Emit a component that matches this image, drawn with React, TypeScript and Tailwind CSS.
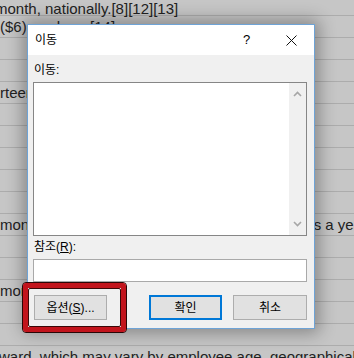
import React from "react";

function Chevron({ up }: { up?: boolean }) {
  return (
    <svg width="9" height="6" viewBox="0 0 9 6" className="block">
      <path
        d={up ? "M1 5 L4.5 1.5 L8 5" : "M1 1 L4.5 4.5 L8 1"}
        fill="none"
        stroke="#a6a6a6"
        strokeWidth="1.6"
      />
    </svg>
  );
}

export default function App() {
  return (
    <div className="relative w-[354px] h-[358px] overflow-hidden bg-[#c6c6c6] font-['Liberation_Sans',Arial,sans-serif] text-[15px] text-[#222222] whitespace-nowrap">
      {/* background page rows */}
      <div className="flex flex-col">
        <div className="h-[16px] border-b border-[#acacac] leading-[16px] pt-[1px] -ml-[5px]">
          month, nationally.[8][12][13]
        </div>
        <div className="h-[22px] border-b border-[#acacac] leading-[22px]">($6) per hour.[14]</div>
        <div className="h-[22px] border-b border-[#acacac]" />
        <div className="h-[22px] border-b border-[#acacac]" />
        <div className="h-[22px] border-b border-[#acacac] leading-[22px]">rteen</div>
        <div className="h-[22px] border-b border-[#acacac]" />
        <div className="h-[22px] border-b border-[#acacac]" />
        <div className="h-[22px] border-b border-[#acacac]" />
        <div className="h-[22px] border-b border-[#acacac]" />
        <div className="h-[22px] border-b border-[#acacac]" />
        <div className="h-[22px] border-b border-[#acacac] leading-[22px] flex">
          <span className="inline-block w-[272px] shrink-0">month</span>
          <span>months a year</span>
        </div>
        <div className="h-[22px] border-b border-[#acacac]" />
        <div className="h-[22px] border-b border-[#acacac]" />
        <div className="h-[22px] border-b border-[#acacac] leading-[22px]">month</div>
        <div className="h-[22px] border-b border-[#acacac]" />
        <div className="h-[22px] border-b border-[#acacac]" />
        <div className="h-[22px] leading-[22px] -ml-[1px]">
          ward, which may vary by employee age, geographical
        </div>
      </div>

      {/* dialog */}
      <div className="absolute left-[27px] top-[24px] w-[288px] border border-[#6ea3d6] bg-[#f0f0f0] shadow-[0_0_16px_4px_rgba(0,0,0,0.32)] font-['Liberation_Sans','Noto_Sans_CJK_KR',sans-serif] text-[12px] text-black">
        {/* title bar */}
        <div className="h-[30px] bg-white flex items-center">
          <div className="pl-[7px] flex-1 leading-[16px]">이동</div>
          <div className="w-[45px] h-[30px] flex items-center justify-center text-[13px]">?</div>
          <div className="w-[45px] h-[30px] flex items-center justify-center">
            <svg width="11" height="11" viewBox="0 0 11 11">
              <path d="M0.5 0.5 L10.5 10.5 M10.5 0.5 L0.5 10.5" stroke="#111" strokeWidth="1" />
            </svg>
          </div>
        </div>
        {/* body */}
        <div className="flex flex-col pl-[5px] pr-[7px] pb-[8px]">
          <div className="mt-[7px] h-[16px] leading-[16px] pl-[1px]">이동:</div>
          <div className="mt-[4px] h-[154px] border border-[#868686] bg-white flex">
            <div className="flex-1" />
            <div className="w-[17px] bg-[#f0f0f0] flex flex-col items-center justify-between py-[8px]">
              <Chevron up />
              <Chevron />
            </div>
          </div>
          <div className="mt-[3px] h-[16px] leading-[16px] pl-[1px]">
            참조(<span className="underline">R</span>):
          </div>
          <div className="mt-[4px] h-[23px] border border-[#a9a9a9] bg-white" />
          <div className="mt-[13px] flex items-center">
            <div className="ml-[1px] w-[73px] h-[25px] border border-[#adadad] bg-[#e1e1e1] flex items-center justify-center">
              옵션(<span className="underline">S</span>)...
            </div>
            <div className="flex-1" />
            <div className="w-[73px] h-[25px] border-2 border-[#0078d7] bg-[#e1e1e1] flex items-center justify-center">
              확인
            </div>
            <div className="ml-[11px] w-[74px] h-[25px] border border-[#adadad] bg-[#e1e1e1] flex items-center justify-center">
              취소
            </div>
          </div>
        </div>
      </div>

      {/* red highlight */}
      <div className="absolute left-[22px] top-[282px] w-[105px] h-[51px] rounded-[4px] border border-[#2a0606]">
        <div className="h-full border-[5px] border-[#c2141c] rounded-[3px]">
          <div className="h-full border border-[#3a0808] rounded-[2px]" />
        </div>
      </div>
    </div>
  );
}
